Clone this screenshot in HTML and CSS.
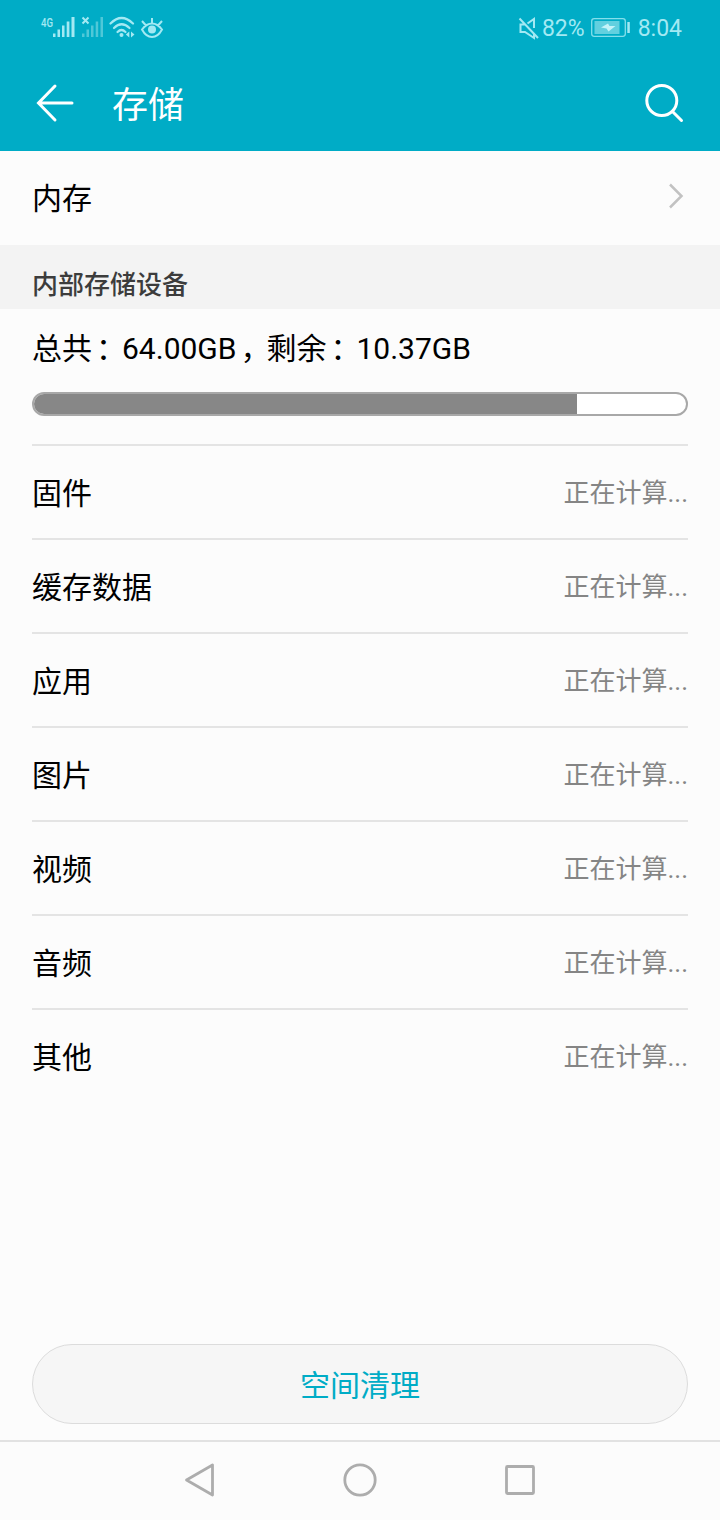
FILE: index.html
```
<!DOCTYPE html>
<html lang="zh-CN">
<head>
  <meta charset="UTF-8" />
  <title>存储</title>
  <link rel="stylesheet" href="styles.css">
</head>
<body>

<header>
  <div class="status-bar">
    <svg class="status-left" width="140" height="32" viewBox="34 12 140 32" fill="none">
      <text class="net-type" x="41" y="26.5" textLength="12" lengthAdjust="spacingAndGlyphs">4G</text>
      <g fill="#a3e9f3">
        <rect x="53" y="33.5" width="2.5" height="3.5" />
        <rect x="57.5" y="29.5" width="2.5" height="7.5" />
        <rect x="62" y="25.5" width="2.5" height="11.5" />
        <rect x="66.7" y="21.5" width="2.7" height="15.5" />
        <rect x="71.5" y="17" width="3" height="20" />
      </g>
      <g fill="#4fc8d8">
        <rect x="82" y="33.5" width="2.5" height="3.5" />
        <rect x="86.5" y="29.5" width="2.5" height="7.5" />
        <rect x="91" y="25.5" width="2.5" height="11.5" />
        <rect x="95.7" y="21.5" width="2.5" height="15.5" />
        <rect x="100.5" y="17" width="2.5" height="20" />
      </g>
      <path d="M82.5 17.5l6 6M88.5 17.5l-6 6" stroke="#a3e9f3" stroke-width="2" />
      <g stroke="#a3e9f3" stroke-width="2.2" stroke-linecap="round">
        <path d="M110.5 23.5Q121.5 12.5 133 23.5" />
        <path d="M114 28Q121.5 20.5 129.5 28" />
        <path d="M117.5 32Q121.5 28 125.5 32" />
      </g>
      <circle cx="121.5" cy="35" r="2" fill="#a3e9f3" />
      <path d="M129.3 31.5v6l-3.5-3zM131 31.5v6l3.5-3z" fill="#a3e9f3" />
      <path d="M142 29.5Q146.5 23.5 152 23.5T162 29.5Q158 37 152 37T142 29.5zM142 21l4 4.5M152 18v5.5M162 21l-4 4.5" stroke="#a3e9f3" stroke-width="2" />
      <circle cx="152" cy="29.5" r="4" fill="#a3e9f3" />
    </svg>
    <div class="status-right">
      <svg width="22" height="24" viewBox="518 16 22 24" fill="none" stroke="#a3e9f3" stroke-width="2">
        <path d="M519.5 18.5l18.5 19.5M525 24.5h-4.5v7.5h4.5l9 6v-4M534 28v-9l-6.5 4.5" />
      </svg>
      <span class="percent">82%</span>
      <svg width="40" height="20" viewBox="591 18 40 20" fill="none">
        <rect x="591.7" y="18.7" width="33.6" height="17.6" rx="2.5" stroke="#84dfeb" stroke-width="1.3" />
        <rect x="594.5" y="21" width="25" height="13" fill="#62d0df" />
        <path d="M601 27.5l7-4 1.5 2.5h6l-7 5.5-2-3z" fill="#c4f4f9" />
        <rect x="627.3" y="22" width="2.5" height="11" fill="#a3e9f3" />
      </svg>
      <span class="clock">8:04</span>
    </div>
  </div>

  <div class="title-bar">
    <svg class="back" width="40" height="40" viewBox="0 0 40 40">
      <path d="M38 20H5M21 3L4.500 20L21 37" />
    </svg>
    <h1>存储</h1>
    <svg class="search" width="40" height="40" viewBox="0 0 40 40">
      <circle cx="17.8" cy="17.5" r="15" />
      <path d="M28.5 28.5L37.5 37.5" />
    </svg>
  </div>
</header>

<main>
  <a class="memory">
    <span>内存</span>
    <svg width="18" height="28" viewBox="0 0 18 28">
      <path d="M3 2.5L14.5 14L3 25.5" />
    </svg>
  </a>

  <h2>内部存储设备</h2>

  <div class="container">
    <div class="summary">总共<span class="mark">：</span>64.00GB<span class="mark">，</span>剩余<span class="mark">：</span>10.37GB</div>
    <div class="usage"><div class="used"></div></div>
    <ul>
      <li><span>固件</span><span class="size">正在计算...</span></li>
      <li><span>缓存数据</span><span class="size">正在计算...</span></li>
      <li><span>应用</span><span class="size">正在计算...</span></li>
      <li><span>图片</span><span class="size">正在计算...</span></li>
      <li><span>视频</span><span class="size">正在计算...</span></li>
      <li><span>音频</span><span class="size">正在计算...</span></li>
      <li><span>其他</span><span class="size">正在计算...</span></li>
    </ul>
  </div>

  <button class="clean-btn">空间清理</button>
</main>

<nav>
  <svg width="40" height="40" viewBox="0 0 40 40"><path d="M6.5 20L32.5 5V35z" /></svg>
  <svg width="40" height="40" viewBox="0 0 40 40"><circle cx="20" cy="20" r="15.2" /></svg>
  <svg width="40" height="40" viewBox="0 0 40 40"><rect x="6.5" y="6.5" width="27" height="27" rx="1" /></svg>
</nav>

</body>
</html>
```
FILE: styles.css
```
* {
  box-sizing: border-box;
}

body {
  font-family: Roboto, "Noto Sans CJK SC", sans-serif;
  margin: 0;
  height: 1520px;
  background: #fcfcfc;
  color: #000;
  display: flex;
  flex-direction: column;
}

svg {
  display: block;
  flex-shrink: 0;
}

header {
  height: 151px;
  background: #00acc6;
  color: white;
}

.status-bar {
  height: 56px;
  padding: 0 38px 0 34px;
  display: flex;
  justify-content: space-between;
  align-items: center;
}

.net-type {
  font-size: 12.5px;
  font-weight: 500;
  fill: #a3e9f3;
}

.status-right {
  display: flex;
  align-items: center;
  color: #a3e9f3;
  font-size: 23px;
}

.percent {
  margin: 0 6px 0 2px;
}

.clock {
  margin-left: 7px;
}

.title-bar {
  height: 93px;
  padding: 0 36px 0 34px;
  display: flex;
  align-items: center;
}

.title-bar svg {
  fill: none;
  stroke: white;
  stroke-width: 3;
  stroke-linecap: round;
}

h1 {
  flex: 1;
  margin: 0;
  padding: 6px 0 0 38px;
  font-size: 36px;
  font-weight: normal;
  line-height: 50px;
}

main {
  flex: 1;
  display: flex;
  flex-direction: column;
}

.memory {
  height: 94px;
  padding: 0 35px 4px 32px;
  display: flex;
  justify-content: space-between;
  align-items: center;
  font-size: 30px;
}

.memory svg {
  fill: none;
  stroke: #c2c2c2;
  stroke-width: 2.5;
}

h2 {
  height: 64px;
  margin: 0;
  padding: 15px 32px 0;
  background: #f3f3f3;
  color: #3c3c3c;
  font-size: 26px;
  font-weight: 500;
  line-height: 50px;
}

.container {
  padding: 0 32px;
}

.summary {
  height: 83px;
  font-size: 30px;
  line-height: 80px;
}

/* half-width punctuation with its own spacing */
.mark {
  padding: 0 11px 0 4px;
  font-feature-settings: "halt";
}

.usage {
  height: 24px;
  border: 2px solid #a8a8a8;
  border-radius: 12px;
  background: white;
  overflow: hidden;
}

.used {
  width: 543px;
  height: 100%;
  background: #878787;
}

ul {
  margin: 28px 0 0;
  padding: 0;
  list-style: none;
}

li {
  height: 94px;
  padding-bottom: 3px;
  border-top: 2px solid #e4e4e4;
  display: flex;
  justify-content: space-between;
  align-items: center;
  font-size: 30px;
}

.size {
  color: #858585;
  font-size: 26px;
}

.clean-btn {
  height: 80px;
  margin: auto 32px 16px;
  padding: 0 0 3px;
  border: 1px solid #dcdcdc;
  border-radius: 40px;
  background: #f6f6f6;
  color: #00acc6;
  font-family: inherit;
  font-size: 30px;
}

nav {
  height: 80px;
  padding-bottom: 2px;
  border-top: 2px solid #e2e2e2;
  display: flex;
  justify-content: center;
  align-items: center;
  gap: 120px;
}

nav svg {
  fill: none;
  stroke: #adadad;
  stroke-width: 2.8;
  stroke-linejoin: round;
}
```
